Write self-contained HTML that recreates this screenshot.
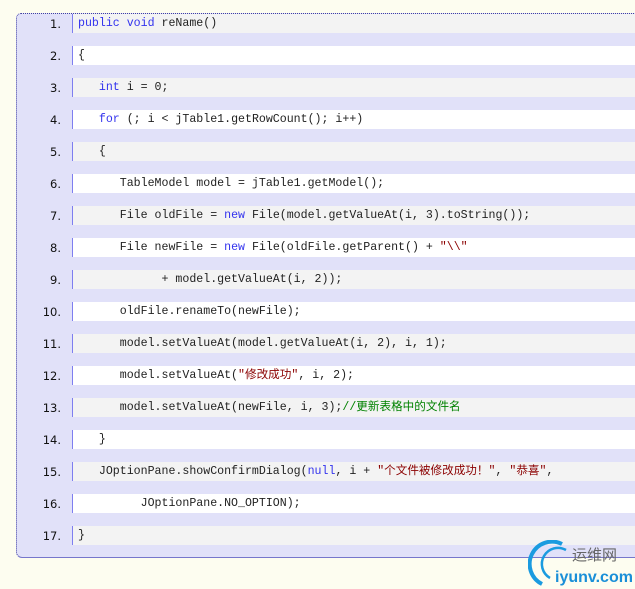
<!DOCTYPE html>
<html><head><meta charset="utf-8"><style>
body{margin:0;width:635px;height:589px;background:#fdfdf0;overflow:hidden;position:relative;font-family:"Liberation Mono","Noto Sans CJK SC",monospace;font-size:11.6px}
#box{position:absolute;left:16px;top:13px;width:640px;height:543px;background:#e1e1f9;border-top:1px dotted #4040a0;border-left:1px dotted #4040a0;border-bottom:1px solid #7676cc;border-radius:5px 0 0 6px}
.r{position:absolute;left:0;width:640px;height:19px;line-height:20px}
.n{position:absolute;left:0;width:44px;text-align:right;color:#111;font-family:"DejaVu Sans",sans-serif;font-size:11.5px}
.c{position:absolute;left:55px;right:0;top:0;bottom:0;border-left:1px solid #7e7ef0;padding-left:5px;white-space:pre;color:#222}
.g{background:#f3f3f3}.w{background:#fff}
.k{color:#3333ee}.s{color:#8b0000}.m{color:#008200}
</style></head><body><div id="box">
<div class="r" style="top:0"><span class="n">1.</span><div class="c g"><span class="k">public void</span> reName()</div></div>
<div class="r" style="top:32px"><span class="n">2.</span><div class="c w">{</div></div>
<div class="r" style="top:64px"><span class="n">3.</span><div class="c g">   <span class="k">int</span> i = 0;</div></div>
<div class="r" style="top:96px"><span class="n">4.</span><div class="c w">   <span class="k">for</span> (; i &lt; jTable1.getRowCount(); i++)</div></div>
<div class="r" style="top:128px"><span class="n">5.</span><div class="c g">   {</div></div>
<div class="r" style="top:160px"><span class="n">6.</span><div class="c w">      TableModel model = jTable1.getModel();</div></div>
<div class="r" style="top:192px"><span class="n">7.</span><div class="c g">      File oldFile = <span class="k">new</span> File(model.getValueAt(i, 3).toString());</div></div>
<div class="r" style="top:224px"><span class="n">8.</span><div class="c w">      File newFile = <span class="k">new</span> File(oldFile.getParent() + <span class="s">"\\"</span></div></div>
<div class="r" style="top:256px"><span class="n">9.</span><div class="c g">            + model.getValueAt(i, 2));</div></div>
<div class="r" style="top:288px"><span class="n">10.</span><div class="c w">      oldFile.renameTo(newFile);</div></div>
<div class="r" style="top:320px"><span class="n">11.</span><div class="c g">      model.setValueAt(model.getValueAt(i, 2), i, 1);</div></div>
<div class="r" style="top:352px"><span class="n">12.</span><div class="c w">      model.setValueAt(<span class="s">"修改成功"</span>, i, 2);</div></div>
<div class="r" style="top:384px"><span class="n">13.</span><div class="c g">      model.setValueAt(newFile, i, 3);<span class="m">//更新表格中的文件名</span></div></div>
<div class="r" style="top:416px"><span class="n">14.</span><div class="c w">   }</div></div>
<div class="r" style="top:448px"><span class="n">15.</span><div class="c g">   JOptionPane.showConfirmDialog(<span class="k">null</span>, i + <span class="s">"个文件被修改成功！"</span>, <span class="s">"恭喜"</span>,</div></div>
<div class="r" style="top:480px"><span class="n">16.</span><div class="c w">         JOptionPane.NO_OPTION);</div></div>
<div class="r" style="top:512px"><span class="n">17.</span><div class="c g">}</div></div>
</div>
<svg style="position:absolute;left:528px;top:540px" width="107" height="49">
<path d="M34 4 A22 22 0 0 0 14 44" stroke="#1a9be0" stroke-width="4" fill="none"/>
<path d="M38 10 A15 15 0 0 0 22 38" stroke="#1a9be0" stroke-width="2.5" fill="none"/>
<text x="44" y="20" font-family="Noto Sans CJK SC,sans-serif" font-size="15" fill="#666">运维网</text>
<text x="27" y="42" font-family="Liberation Sans,sans-serif" font-size="16" font-weight="bold" fill="#1a8fd8">iyunv.com</text>
</svg>
</body></html>
